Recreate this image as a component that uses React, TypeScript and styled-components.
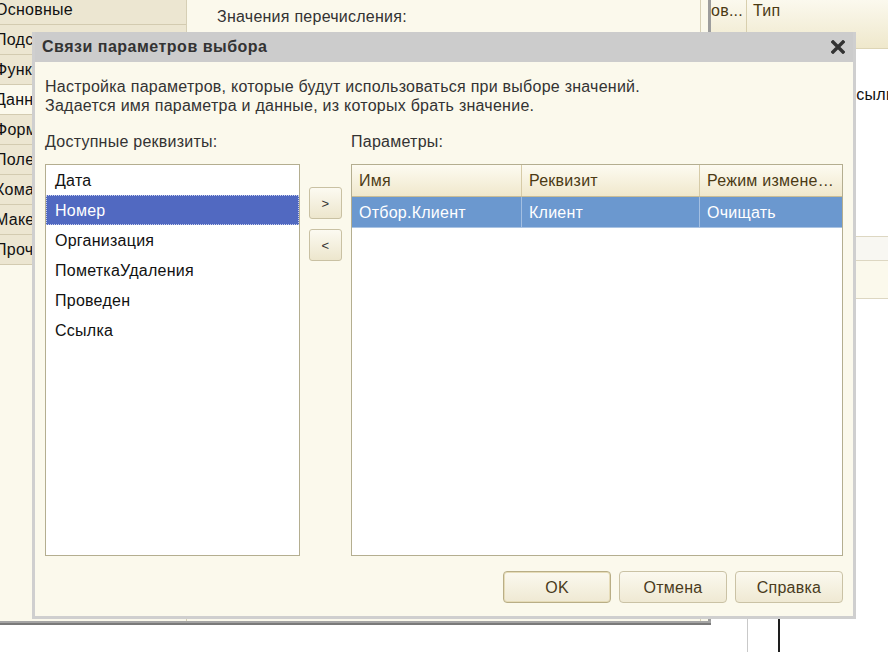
import React from 'react'
import styled, { createGlobalStyle } from 'styled-components'

const GlobalStyle = createGlobalStyle`
  html, body {
    margin: 0;
    padding: 0;
    background: #fff;
  }
  body {
    font-family: 'Liberation Sans', Arial, sans-serif;
  }
`

const tabs = ['Основные', 'Подсистемы', 'Функциональные опции', 'Данные', 'Формы', 'Поле ввода', 'Команды', 'Макеты', 'Прочее']
const attributes = ['Дата', 'Номер', 'Организация', 'ПометкаУдаления', 'Проведен', 'Ссылка']

const App = () => (
  <>
    <GlobalStyle />
    <Screen>
      <EditorWindow>
        <Sidebar>
          <TabList>
            {tabs.map((t) => (
              <Tab key={t} $active={t === 'Данные'}>{t}</Tab>
            ))}
          </TabList>
        </Sidebar>
        <Main>
          <MainLabel>Значения перечисления:</MainLabel>
        </Main>
        <Splitter />
      </EditorWindow>

      <RightPanel>
        <PanelHeader>
          <HeadCell $w={36}>ов...</HeadCell>
          <HeadCell>Тип</HeadCell>
        </PanelHeader>
        <PanelBody>
          <NameColumn />
          <TypeColumn>
            <TypeText>СправочникСсылка.Контрагенты</TypeText>
            <StripeRow $light />
            <StripeRow />
            <RuleArea />
          </TypeColumn>
        </PanelBody>
      </RightPanel>

      <Dialog>
        <TitleBar>
          <span>Связи параметров выбора</span>
          <CloseIcon viewBox="0 0 14 14" width="14" height="14">
            <path d="M2 2 L12 12 M12 2 L2 12" stroke="#333" strokeWidth="3.4" strokeLinecap="square" />
          </CloseIcon>
        </TitleBar>
        <DialogBody>
          <Description>
            Настройка параметров, которые будут использоваться при выборе значений.
            <br />
            Задается имя параметра и данные, из которых брать значение.
          </Description>

          <Columns>
            <Caption>Доступные реквизиты:</Caption>
            <span />
            <Caption>Параметры:</Caption>

            <ListBox>
              {attributes.map((a) => (
                <ListItem key={a} $selected={a === 'Номер'}>{a}</ListItem>
              ))}
            </ListBox>

            <MoveButtons>
              <MoveButton>&gt;</MoveButton>
              <MoveButton>&lt;</MoveButton>
            </MoveButtons>

            <Table>
              <TableHead>
                <TableHeadCell>Имя</TableHeadCell>
                <TableHeadCell>Реквизит</TableHeadCell>
                <TableHeadCell>Режим изменения связанного значения</TableHeadCell>
              </TableHead>
              <TableRow>
                <TableCell>Отбор.Клиент</TableCell>
                <TableCell>Клиент</TableCell>
                <TableCell>Очищать</TableCell>
              </TableRow>
            </Table>
          </Columns>

          <Footer>
            <FooterButton $default>OK</FooterButton>
            <FooterButton>Отмена</FooterButton>
            <FooterButton>Справка</FooterButton>
          </Footer>
        </DialogBody>
      </Dialog>
    </Screen>
  </>
)

export default App

const Screen = styled.div`
  position: relative;
  width: 888px;
  height: 652px;
  overflow: hidden;
  display: flex;
  align-items: flex-start;
  background: #fff;
  font-family: 'Liberation Sans', Arial, sans-serif;
  font-size: 16px;
  letter-spacing: 0.25px;
`

const EditorWindow = styled.div`
  width: 711px;
  height: 621px;
  flex-shrink: 0;
  display: flex;
  background: #fbf9ec;
  border-bottom: 2px solid #a4a4a4;
  box-shadow: 0 2px 0 #7a7a7a;
`

const Sidebar = styled.div`
  width: 186px;
  flex-shrink: 0;
  border-right: 1px solid #d6cfb5;
  overflow: hidden;
`

const TabList = styled.div`
  margin-top: -5px;
`

const Tab = styled.div<{ $active?: boolean }>`
  height: 29px;
  line-height: 30px;
  border-bottom: 1px solid #d3cbb0;
  background: ${({ $active }) => ($active ? '#fbf9ec' : '#ece6d1')};
  color: #111;
  text-indent: -5px;
  white-space: nowrap;
  overflow: hidden;
`

const Main = styled.div`
  flex: 1;
  padding: 8px 0 0 30px;
`

const MainLabel = styled.div`
  line-height: 18px;
  color: #333;
`

const Splitter = styled.div`
  width: 7px;
  border-left: 1px solid #d6cfb5;
  border-right: 3px solid #9d9d9d;
`

const RightPanel = styled.div`
  flex: 1;
  height: 652px;
  display: flex;
  flex-direction: column;
`

const PanelHeader = styled.div`
  height: 48px;
  display: flex;
  background: linear-gradient(#fbf9ee, #efe8cc);
  border-bottom: 1px solid #ddd5b6;
`

const HeadCell = styled.div<{ $w?: number }>`
  width: ${({ $w }) => ($w ? `${$w}px` : 'auto')};
  flex: ${({ $w }) => ($w ? 'none' : '1')};
  box-sizing: border-box;
  padding: 2px 0 0 ${({ $w }) => ($w ? 0 : 6)}px;
  line-height: 18px;
  color: #4b3a14;
  border-right: ${({ $w }) => ($w ? '1px solid #d8cfae' : '0')};
  white-space: nowrap;
  overflow: hidden;
`

const PanelBody = styled.div`
  flex: 1;
  display: flex;
`

const NameColumn = styled.div`
  width: 36px;
  border-right: 1px solid #c9c9c9;
`

const TypeColumn = styled.div`
  flex: 1;
  display: flex;
  flex-direction: column;
  overflow: hidden;
`

const TypeText = styled.div`
  margin: 37px 0 0 6px;
  height: 150px;
  line-height: 18px;
  color: #111;
  white-space: nowrap;
`

const StripeRow = styled.div<{ $light?: boolean }>`
  height: ${({ $light }) => ($light ? 23 : 37)}px;
  background: ${({ $light }) => ($light ? '#f8f7f2' : '#fbf9ec')};
  border-top: 1px solid #ddd7c2;
  ${({ $light }) => ($light ? '' : 'border-bottom: 1px solid #ddd7c2;')}
`

const RuleArea = styled.div`
  flex: 1;
  margin-left: 30px;
  border-left: 2px solid #1e1e1e;
`

const Dialog = styled.div`
  position: absolute;
  left: 32px;
  top: 32px;
  width: 824px;
  height: 587px;
  box-sizing: border-box;
  border: 3px solid #cfcfcf;
  border-top: 0;
  background: #fbf9ec;
  display: flex;
  flex-direction: column;
`

const TitleBar = styled.div`
  height: 29px;
  flex-shrink: 0;
  display: flex;
  align-items: center;
  justify-content: space-between;
  padding: 0 8px 1px 7px;
  background: #cccccc;
  color: #333;
  font-size: 16px;
  font-weight: bold;
  letter-spacing: 0.5px;
`

const CloseIcon = styled.svg`
  display: block;
`

const DialogBody = styled.div`
  flex: 1;
  display: flex;
  flex-direction: column;
  padding: 15px 10px 13px 10px;
`

const Description = styled.div`
  line-height: 19px;
  color: #333;
`

const Columns = styled.div`
  margin-top: 18px;
  display: grid;
  grid-template-columns: 255px 33px 492px;
  grid-template-rows: 18px 392px;
  column-gap: 9px;
  row-gap: 13px;
`

const Caption = styled.div`
  line-height: 18px;
  color: #333;
`

const ListBox = styled.div`
  border: 1px solid #b4ae90;
  background: #fff;
  overflow: hidden;
`

const ListItem = styled.div<{ $selected?: boolean }>`
  height: 30px;
  line-height: 31px;
  padding-left: 9px;
  box-sizing: border-box;
  color: ${({ $selected }) => ($selected ? '#fff' : '#111')};
  background: ${({ $selected }) => ($selected ? '#5169c1' : 'transparent')};
  outline: ${({ $selected }) => ($selected ? '1px dotted #c9d0ee' : 'none')};
  outline-offset: -1px;
`

const MoveButtons = styled.div`
  display: flex;
  flex-direction: column;
  gap: 10px;
  padding-top: 23px;
`

const MoveButton = styled.div`
  height: 32px;
  box-sizing: border-box;
  display: flex;
  align-items: center;
  justify-content: center;
  border: 1px solid #c9c1a3;
  border-radius: 3px;
  background: linear-gradient(#fcfaf1, #ede6cd);
  color: #333;
  font-size: 13px;
`

const Table = styled.div`
  border: 1px solid #b4ae90;
  background: #fff;
  overflow: hidden;
`

const TableHead = styled.div`
  display: grid;
  grid-template-columns: 169px 178px 1fr;
  height: 31px;
  background: linear-gradient(#fdfbf1, #f0e8cc);
  border-bottom: 1px solid #c9bd96;
`

const TableHeadCell = styled.div`
  padding: 0 0 0 7px;
  line-height: 31px;
  color: #4b3a14;
  white-space: nowrap;
  overflow: hidden;
  text-overflow: ellipsis;
  & + & {
    border-left: 1px solid #d6cba7;
  }
`

const TableRow = styled.div`
  display: grid;
  grid-template-columns: 169px 178px 1fr;
  height: 30px;
  background: #6b98cf;
  border-bottom: 1px solid #a9c3e3;
`

const TableCell = styled.div`
  padding-left: 7px;
  line-height: 31px;
  color: #fff;
  white-space: nowrap;
  overflow: hidden;
  & + & {
    border-left: 1px solid #a3bfe2;
  }
`

const Footer = styled.div`
  margin-top: 15px;
  display: flex;
  justify-content: flex-end;
  gap: 8px;
`

const FooterButton = styled.div<{ $default?: boolean }>`
  width: 108px;
  height: 32px;
  box-sizing: border-box;
  display: flex;
  align-items: center;
  justify-content: center;
  padding-top: 1px;
  border: 1px solid ${({ $default }) => ($default ? '#b9ae86' : '#cac2a5')};
  border-radius: 4px;
  background: linear-gradient(#fbf9ef, #efe9d3);
  box-shadow: ${({ $default }) => ($default ? 'inset 0 0 0 1px #e6dcb8' : 'none')};
  color: #4a3b1c;
`
